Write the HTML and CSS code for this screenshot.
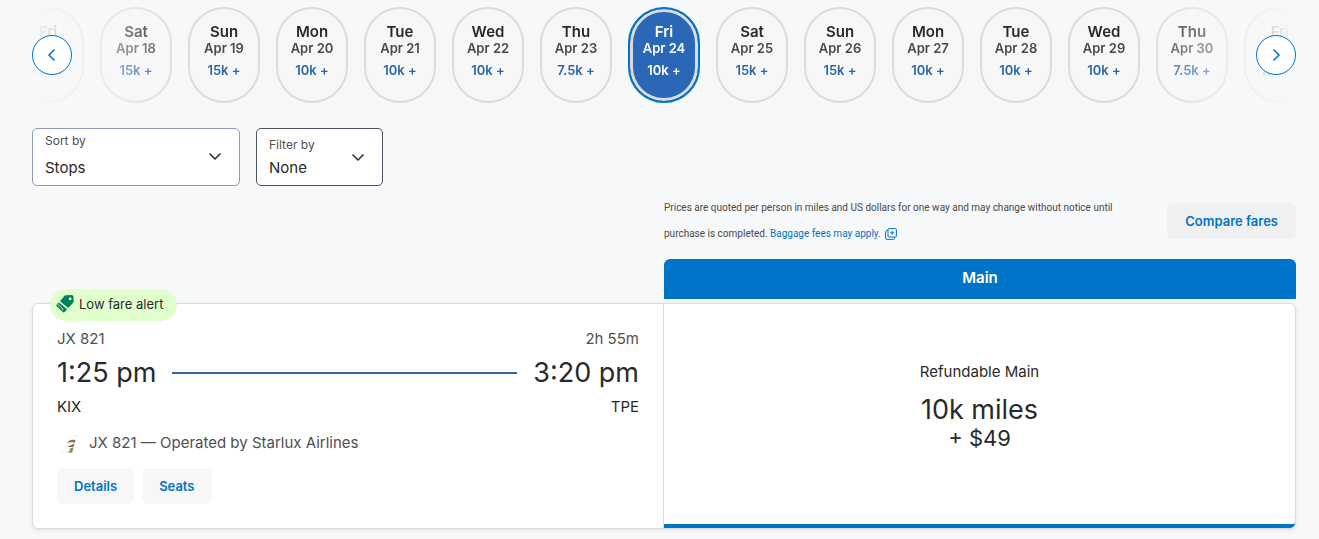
FILE: index.html
```html
<!DOCTYPE html>
<html lang="en">
<head>
  <meta charset="UTF-8">
  <meta name="viewport" content="width=device-width, initial-scale=1.0">
  <title>KIX to TPE - Flights</title>
  <link rel="stylesheet" href="styles.css">
</head>
<body>
  <main class="page">
    <nav class="calendar" aria-label="Departure date">
      <div class="dates">
        <button class="date"><b>Fri</b><span>Apr 17</span><em>15k +</em></button>
        <button class="date"><b>Sat</b><span>Apr 18</span><em>15k +</em></button>
        <button class="date"><b>Sun</b><span>Apr 19</span><em>15k +</em></button>
        <button class="date"><b>Mon</b><span>Apr 20</span><em>10k +</em></button>
        <button class="date"><b>Tue</b><span>Apr 21</span><em>10k +</em></button>
        <button class="date"><b>Wed</b><span>Apr 22</span><em>10k +</em></button>
        <button class="date"><b>Thu</b><span>Apr 23</span><em>7.5k +</em></button>
        <button class="date selected" aria-current="date"><b>Fri</b><span>Apr 24</span><em>10k +</em></button>
        <button class="date"><b>Sat</b><span>Apr 25</span><em>15k +</em></button>
        <button class="date"><b>Sun</b><span>Apr 26</span><em>15k +</em></button>
        <button class="date"><b>Mon</b><span>Apr 27</span><em>10k +</em></button>
        <button class="date"><b>Tue</b><span>Apr 28</span><em>10k +</em></button>
        <button class="date"><b>Wed</b><span>Apr 29</span><em>10k +</em></button>
        <button class="date"><b>Thu</b><span>Apr 30</span><em>7.5k +</em></button>
        <button class="date"><b>Fri</b><span>May 1</span><em>7.5k +</em></button>
      </div>
      <button class="arrow prev" aria-label="Earlier dates">
        <svg width="16" height="16" viewBox="0 0 16 16"><path d="M10.500 2.500 5 8l5.500 5.500"/></svg>
      </button>
      <button class="arrow next" aria-label="Later dates">
        <svg width="16" height="16" viewBox="0 0 16 16"><path d="M5.500 2.500 11 8l-5.500 5.500"/></svg>
      </button>
    </nav>

    <div class="filters">
      <div class="field sort">
        <label for="sort">Sort by</label>
        <select id="sort">
          <option>Stops</option>
          <option>Price</option>
          <option>Duration</option>
        </select>
        <svg width="16" height="16" viewBox="0 0 16 16"><path d="m2.500 5.500 5.500 5.500 5.500-5.500"/></svg>
      </div>
      <div class="field filter">
        <label for="filter">Filter by</label>
        <select id="filter">
          <option>None</option>
          <option>Nonstop</option>
        </select>
        <svg width="16" height="16" viewBox="0 0 16 16"><path d="m2.500 5.500 5.500 5.500 5.500-5.500"/></svg>
      </div>
    </div>

    <div class="fares-head">
      <div class="notice">
        <p>Prices are quoted per person in miles and US dollars for one way and may change without notice until purchase is completed.
          <a href="#">Baggage fees may apply.<svg width="12" height="12" viewBox="0 0 12 12"><rect x="3" y=".6" width="8.400" height="8.400" rx="1"/><path d="M3 2.600H1.600a1 1 0 0 0-1 1v6.800a1 1 0 0 0 1 1h6.800a1 1 0 0 0 1-1V9M7.200 2.800v4M5.200 4.800h4"/></svg></a></p>
        <button class="btn compare">Compare fares</button>
      </div>
      <h2>Main</h2>
    </div>

    <article class="flight">
      <div class="badge">
        <svg width="18" height="18" viewBox="0 0 18 18">
          <path fill="#00805f" fill-rule="evenodd" d="M9.800.3 15.500 0q1.900 0 2 1.900l.2 4.300q0 .9-.6 1.500l-4.800 5.300L4 6.300 8.300.9q.6-.6 1.500-.6zM14.200 2.400a1.400 1.400 0 1 0 0 2.800 1.400 1.400 0 0 0 0-2.800z"/>
          <path fill="#00805f" d="M2.800 7.500 11 14q-.7 1.800-2.600 3.200-.9.600-1.700-.2L.7 11.300q-.9-.9-.1-1.800z"/>
          <path stroke="#e1ffcd" stroke-width=".8" d="m1.300 9.200 5.500 4.500-.3 1.800"/>
        </svg>
        Low fare alert
      </div>
      <div class="details">
        <div class="row muted"><span>JX 821</span><span>2h 55m</span></div>
        <div class="row times"><span>1:25 pm</span><i class="line"></i><span>3:20 pm</span></div>
        <div class="row"><span>KIX</span><span>TPE</span></div>
        <div class="operator muted">
          <svg width="24" height="24" viewBox="0 0 24 24">
            <path stroke="#f5f4f3" stroke-width="1" d="M3 21.500 10 15c3-5 3-10 10-11l-4 17.500z"/>
            <path fill="#97705f" d="M10 12.200q2.500-4.500 8.500-3.200l-.8 2.800q-3.500-1.300-7.700.4z"/>
            <path fill="#75604a" d="M10.500 15.500q4-1 6.800-3l-.6 2.700q-2.800 1.600-6.200.3z"/>
            <path fill="#94845c" d="M10.500 21.500q3-1.500 2.200-4 2.300-.2 3.800-1.500l-1.300 5.500z"/>
          </svg>
          <span>JX 821 — Operated by Starlux Airlines</span>
        </div>
        <div class="actions">
          <button class="btn">Details</button>
          <button class="btn">Seats</button>
        </div>
      </div>
      <button class="fare">
        <span class="fare-name">Refundable Main</span>
        <span class="miles">10k miles</span>
        <span class="cash">+ $49</span>
      </button>
    </article>
  </main>
</body>
</html>
```
FILE: styles.css
```css
* {
  box-sizing: border-box;
}
body {
  margin: 0;
  background: #f7f8fa;
  color: #2a2a2a;
  font: 15px/24px Inter, "Liberation Sans", sans-serif;
}
button, select {
  font: inherit;
  color: inherit;
  cursor: pointer;
}
svg {
  fill: none;
  stroke-width: 1.5;
}
.page {
  padding: 7px 23px 10px 32px;
}

/* date strip */
.calendar {
  position: relative;
}
.dates {
  display: flex;
  justify-content: center;
  gap: 16px;
  overflow: hidden;
  -webkit-mask-image: linear-gradient(90deg, transparent, #000 160px, #000 calc(100% - 160px), transparent);
  mask-image: linear-gradient(90deg, transparent, #000 160px, #000 calc(100% - 160px), transparent);
}
.date {
  flex: none;
  display: flex;
  flex-direction: column;
  align-items: center;
  width: 72px;
  height: 96px;
  padding: 14px 0 0;
  border: 2px solid #dcdcdc;
  border-radius: 36px;
  background: #f7f7f7;
  font-size: 13px;
  font-weight: 600;
  line-height: 17px;
  white-space: nowrap;
}
.date b {
  font-size: 15px;
  font-weight: 600;
}
.date span {
  color: #4a4a4a;
}
.date em {
  margin-top: 5px;
  color: #2d67a8;
  font-style: normal;
}
.date.selected {
  border-color: #0074c8;
  background: #2b67b7;
  box-shadow: inset 0 0 0 3px #dcdcdc;
}
.date.selected * {
  color: #fff;
}
.arrow {
  position: absolute;
  top: 28px;
  display: grid;
  place-items: center;
  width: 40px;
  height: 40px;
  padding: 0;
  border: 1px solid #0074c8;
  border-radius: 50%;
  background: #fff;
}
.arrow svg {
  stroke: #0074c8;
}
.prev {
  left: 0;
}
.next {
  right: 0;
}

/* sort and filter */
.filters {
  display: flex;
  gap: 16px;
  margin-top: 25px;
}
.field {
  display: grid;
  grid-template-columns: 1fr 16px;
  align-content: center;
  align-items: center;
  height: 58px;
  padding: 0 16px 0 12px;
  border: 1px solid #8e9bb0;
  border-radius: 5px;
  background: #fff;
}
.field label {
  color: #4f4f4f;
  font-size: 12px;
  line-height: 20px;
}
.field select {
  grid-row: 2;
  grid-column: 1 / 3;
  width: 100%;
  padding: 0;
  border: 0;
  background: none;
  appearance: none;
}
.field svg {
  grid-row: 1 / 3;
  grid-column: 2;
  stroke: #2a2a2a;
  pointer-events: none;
}
.sort {
  align-content: start;
  row-gap: 5px;
  width: 208px;
  padding-top: 2px;
}
.filter {
  row-gap: 1px;
  width: 127px;
  border-color: #4d5364;
}

/* fare header */
.fares-head {
  width: 50%;
  margin: 9px 0 4px auto;
}
.notice {
  display: flex;
  align-items: center;
  justify-content: space-between;
  gap: 24px;
  margin-bottom: 12px;
}
.notice p {
  flex: 0 1 470px;
  margin: 0;
  color: #4a4a4a;
  font-family: Roboto, "Liberation Sans", sans-serif;
  font-size: 10px;
  line-height: 26px;
}
.notice a {
  color: #0074c8;
  text-decoration: none;
}
.notice svg {
  margin-left: 4px;
  stroke: #0074c8;
  stroke-width: 1;
  vertical-align: middle;
}
.fares-head h2 {
  margin: 0;
  border-radius: 6px 6px 0 0;
  background: #0074c8;
  color: #fff;
  font-size: 15px;
  font-weight: 600;
  line-height: 38px;
  height: 40px;
  text-align: center;
}
.btn {
  height: 36px;
  padding: 0 17px;
  border: 0;
  border-radius: 6px;
  background: #f7f7f7;
  color: #0074c8;
  font-size: 13px;
  font-weight: 600;
  white-space: nowrap;
}
.btn.compare {
  padding: 0 18px;
  background: #eff0f1;
}

/* flight card */
.flight {
  position: relative;
  display: grid;
  grid-template-columns: 1fr 1fr;
  border: 1px solid #dcdcdc;
  border-radius: 6px;
  background: #fff;
  box-shadow: 0 1px 4px rgb(0 0 0 / .1);
}
.badge {
  position: absolute;
  top: -15px;
  left: 17px;
  display: flex;
  align-items: center;
  gap: 5px;
  height: 32px;
  padding: 0 14px 2px 6px;
  border-radius: 16px;
  background: #e1ffcd;
  font-size: 13px;
}
.details {
  padding: 23px 24px 24px;
  border-right: 1px solid #dcdcdc;
}
.row {
  display: flex;
  align-items: center;
  justify-content: space-between;
}
.muted {
  color: #4f4f4f;
}
.times {
  gap: 16px;
  font-size: 27px;
  line-height: 44px;
}
.line {
  flex: 1;
  height: 2px;
  background: #2d67a8;
}
.operator {
  display: flex;
  align-items: center;
  gap: 8px;
  margin: 12px 0 13px;
}
.actions {
  display: flex;
  gap: 8px;
}
.fare {
  display: flex;
  flex-direction: column;
  align-items: center;
  justify-content: center;
  padding: 0 0 16px;
  border: 0;
  border-bottom: 4px solid #0074c8;
  border-radius: 0 5px 5px 0;
  background: none;
}
.fare-name {
  margin-bottom: 12px;
}
.miles {
  font-size: 27px;
  line-height: 28px;
}
.cash {
  font-size: 22px;
  line-height: 28px;
}
```
